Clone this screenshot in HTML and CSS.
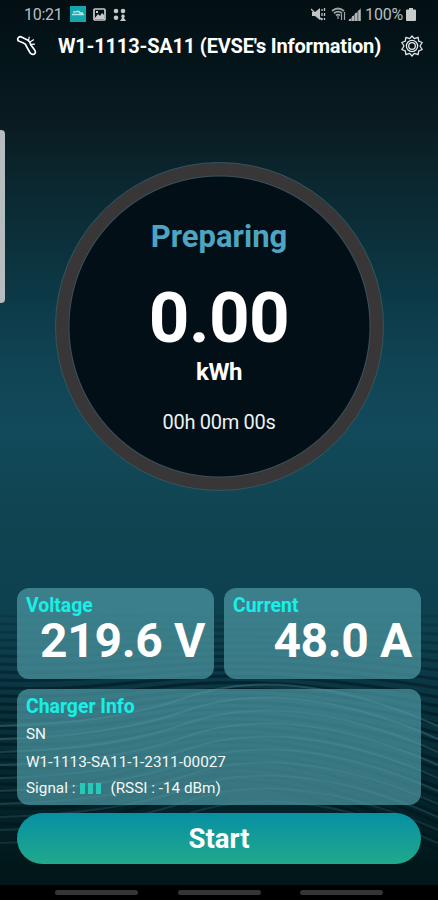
FILE: index.html
```html
<!DOCTYPE html>
<html lang="en">
<head>
    <meta charset="UTF-8">
    <meta name="viewport" content="width=device-width, initial-scale=1.0">
    <title>EVSE Charger</title>
    <link rel="stylesheet" href="styles.css">
</head>
<body>
    <div class="app">
        <!-- Background waves -->
        <svg class="waves" viewBox="0 0 438 285" preserveAspectRatio="none" aria-hidden="true">
            <g id="wave-dark" fill="none" stroke="#02151d" stroke-width="3"></g>
            <g id="wave-light" fill="none" stroke="#6fa9b3" stroke-width="2"></g>
        </svg>

        <!-- Status bar -->
        <div class="status-bar">
            <div class="status-left">
                <span class="clock">10:21</span>
                <svg class="app-icon" width="16" height="16" viewBox="0 0 16 16"><rect width="16" height="16" fill="#17a5ad"/><path d="M2 8.500h12M3 6h3M6 5.500h3l1 1.500h3" stroke="#a8e7e4" stroke-width="1.4" fill="none"/></svg>
                <svg class="picture-icon" width="13" height="13" viewBox="0 0 13 13"><rect x="1" y="1" width="11" height="11" rx="1" fill="none" stroke="#c9cccd" stroke-width="1.7"/><path d="M2 10l3-4 2 2 2-3 2 2v4H2zM3 3h2v2H3z" fill="#c9cccd"/></svg>
                <svg width="13" height="13" viewBox="0 0 13 13" fill="#c5c8c9"><circle cx="3" cy="3" r="2.300"/><circle cx="10" cy="3" r="2.300"/><circle cx="3" cy="9.800" r="2.300"/><path d="M10 6l2 2-1 2 2 3H7l2-3-1-2z"/></svg>
            </div>
            <div class="status-right">
                <svg width="15" height="14" viewBox="0 0 15 14"><path d="M1 5h3l5-4v12L4 9H1z" fill="#c0c4c5"/><path d="M0 2l11 11M11 2v2M13.500 1v3M11 6v3M13.500 6v3M11 11v2M13.500 11v2" stroke="#c0c4c5" stroke-width="1.300"/></svg>
                <svg class="wifi" width="15" height="14" viewBox="0 0 15 14" fill="none" stroke="#9fa5a7" stroke-width="1.800"><path d="M1 4q6-5 12 0M3 6.300q4-3.300 8 0M5 8.500q2-1.700 4 0"/><path d="M7 9v3M10.500 13V7M13.500 5v8" stroke-width="1.200"/></svg>
                <svg width="13" height="13" viewBox="0 0 13 13"><path d="M0 13L13 0v13z" fill="#74797b"/><path d="M2 13v-2M5 13V8M8 13V5M11.500 13V2" stroke="#b5babb" stroke-width="1.800"/></svg>
                <span class="battery-text">100%</span>
                <svg class="battery" width="10" height="13" viewBox="0 0 10 13"><path d="M3 0h4v1.500h2q1 0 1 1V12q0 1-1 1H1q-1 0-1-1V2.500q0-1 1-1h2z" fill="#c9cccd"/></svg>
            </div>
        </div>

        <!-- Header -->
        <header class="header">
            <svg class="plug-icon" width="22" height="22" viewBox="0 0 22 22" fill="none" stroke="#fff" stroke-width="1.700" stroke-linejoin="round" stroke-linecap="round"><path d="M2.500 2.500Q4 1 6 2.200L12 5.300Q14.200 6.500 14.600 9.500L18.800 15.300Q20.300 18 18 19.200Q15.800 20 14.200 18L10.500 11.500Q10 9 7.500 8L2.600 6Q.8 4.500 2.500 2.500z"/><path d="M12.600 5l.6-3M14.500 6.800l3-2M15.200 9.300l3.300-.2" stroke-width="1.200"/></svg>
            <h1>W1-1113-SA11 (EVSE's Information)</h1>
            <svg class="gear-icon" width="22" height="22" viewBox="0 0 22 22" fill="none" stroke="#e4e7e8" stroke-width="1.300" stroke-linejoin="round"><path d="M11 1l2.300 2.700 3.800-1.400.6 3.900 3.500 1.300L19 11l2.200 3.500-3.500 1.300-.6 3.900-3.800-1.400L11 21l-2.300-2.700-3.800 1.400-.6-3.900-3.500-1.300L3 11 .8 7.500l3.500-1.300.6-3.900 3.800 1.400z"/><circle cx="11" cy="11" r="5.600"/><circle cx="11" cy="11" r="3.300"/></svg>
        </header>

        <div class="edge-handle"></div>

        <!-- Charging dial -->
        <main class="dial">
            <div class="dial-status">Preparing</div>
            <div class="dial-energy">0.00</div>
            <div class="dial-unit">kWh</div>
            <div class="dial-time">00h 00m 00s</div>
        </main>

        <section class="panels">
            <div class="readings">
                <div class="card reading">
                    <h2>Voltage</h2>
                    <div class="value">219.6 V</div>
                </div>
                <div class="card reading">
                    <h2>Current</h2>
                    <div class="value">48.0 A</div>
                </div>
            </div>
            <div class="card charger-info">
                <h2>Charger Info</h2>
                <p>SN</p>
                <p class="serial">W1-1113-SA11-1-2311-00027</p>
                <p class="signal">Signal : <span class="bars"><i></i><i></i><i></i></span> <span>(RSSI : -14 dBm)</span></p>
            </div>
            <button class="start-button">Start</button>
        </section>

        <!-- System navigation -->
        <nav class="nav-bar"><span></span><span></span><span></span></nav>
    </div>
    <script src="script.js"></script>
</body>
</html>
```

FILE: styles.css
```css
* {
    box-sizing: border-box;
}
body {
    margin: 0;
    font-family: Roboto, "Liberation Sans", sans-serif;
    color: #fff;
    background: #000;
}
h1, h2, p {
    margin: 0;
}
svg {
    flex: none;
}
.app {
    position: relative;
    isolation: isolate;
    width: 438px;
    height: 900px;
    overflow: hidden;
    display: flex;
    flex-direction: column;
    background: linear-gradient(#030f13 0, #04151a 60px, #0a1c22 125px, #0b2b34 205px, #0c3744 285px, #104454 365px, #124a5b 430px, #104451 510px, #0e4250 580px, #0d3e4b 645px, #09323e 710px, #04242b 800px, #011719 870px);
}
.waves {
    position: absolute;
    z-index: -1;
    top: 600px;
    left: 0;
    width: 438px;
    height: 285px;
}
.status-bar {
    height: 28px;
    padding: 0 22px 0 24px;
    display: flex;
    justify-content: space-between;
    align-items: center;
    font-size: 16px;
    color: #b9bfc1;
}
.status-left, .status-right {
    display: flex;
    align-items: center;
}
.status-left {
    gap: 8px;
}
.clock {
    letter-spacing: -0.3px;
}
.picture-icon {
    margin: 0 -1px;
}
.status-right {
    gap: 2px;
}
.wifi {
    margin-left: 3px;
}
.battery-text {
    margin-left: 2px;
    letter-spacing: -0.2px;
}
.battery {
    margin-left: 1px;
}
.header {
    height: 36px;
    padding: 0 15px 0 16px;
    display: flex;
    align-items: center;
    justify-content: space-between;
}
.header h1 {
    font-size: 20px;
    line-height: 36px;
    letter-spacing: -0.19px;
    white-space: nowrap;
}
.edge-handle {
    position: absolute;
    top: 130px;
    left: 0;
    width: 5px;
    height: 173px;
    border-radius: 0 4px 4px 0;
    background: #b7bdbf;
}
.dial {
    width: 329px;
    height: 329px;
    flex: none;
    margin: 98px auto 0;
    padding-top: 41px;
    border: 1px solid #33565f;
    border-radius: 50%;
    text-align: center;
    background: radial-gradient(circle, #020f17 149.5px, #38525b 150.5px, #383637 151.5px);
}
.dial-status {
    padding-top: 15px;
    font-size: 31px;
    line-height: 36px;
    font-weight: bold;
    color: #4ea5c2;
}
.dial-energy {
    margin-top: 21px;
    font-size: 71px;
    line-height: 84px;
    letter-spacing: -0.6px;
    font-weight: bold;
}
.dial-unit {
    margin-top: -2px;
    font-size: 24px;
    line-height: 28px;
    letter-spacing: -0.5px;
    font-weight: bold;
}
.dial-time {
    margin-top: 24px;
    font-size: 20px;
    line-height: 24px;
    letter-spacing: -0.3px;
    color: #edf1f2;
}
.panels {
    padding: 97px 17px 0;
    display: flex;
    flex-direction: column;
    gap: 10px;
}
.readings {
    display: flex;
    gap: 10px;
}
.card {
    border-radius: 12px;
    background: rgba(79, 154, 165, 0.7);
}
.card h2 {
    font-size: 19.4px;
    line-height: 22px;
    color: #16f0e6;
}
.reading {
    flex: 1;
    height: 91px;
    padding: 7px 9px;
}
.value {
    font-size: 48px;
    line-height: 48px;
    letter-spacing: -0.35px;
    text-align: right;
    font-weight: bold;
}
.charger-info {
    height: 116px;
    padding: 7px 9px;
    font-size: 15.3px;
    color: #f4f8f8;
}
.charger-info p {
    line-height: 27px;
    margin-top: 3px;
}
.charger-info .serial {
    margin-top: 1px;
}
.charger-info .signal {
    margin-top: -1px;
    display: flex;
    align-items: center;
    gap: 5px;
}
.bars {
    display: flex;
    gap: 3px;
    margin-right: 4px;
}
.bars i {
    width: 5px;
    height: 11px;
    background: #26c9b7;
}
.start-button {
    height: 51px;
    margin-top: -2px;
    padding: 0;
    border: none;
    border-radius: 26px;
    background: linear-gradient(#088fa4, #20a98b);
    color: #fff;
    font: bold 27.5px Roboto, sans-serif;
}
.nav-bar {
    height: 15px;
    margin-top: auto;
    padding: 5px 55px;
    display: flex;
    justify-content: space-between;
    background: #000;
}
.nav-bar span {
    width: 83px;
    height: 5px;
    border-radius: 3px;
    background: #353535;
}
```

FILE: script.js
```js
function addWaves(id, count, getPath, getOpacity) {
    const group = document.getElementById(id);
    for (let i = 0; i < count; i++) {
        const path = document.createElementNS("http://www.w3.org/2000/svg", "path");
        path.setAttribute("d", getPath(i));
        path.setAttribute("opacity", getOpacity(i));
        group.appendChild(path);
    }
}

// Flat ripples that bend upwards in the middle further down
addWaves("wave-dark", 27, i => {
    const y = 16 + i * 8;
    const rise = i * 1.8;
    return `M0 ${y} C60 ${y + 2} 100 ${y - 2} 160 ${y - rise / 2} S300 ${y - rise} 438 ${y + i}`;
}, i => Math.min(0.6, 0.12 + i * 0.045));

// Lighter arcs behind the charger info
addWaves("wave-light", 10, i => {
    const y = 86 + i * 13;
    return `M0 ${y + 40} Q115 ${y + 37} 185 ${y + 12} C245 ${y - 10} 330 ${y - 8} 438 ${y + 40}`;
}, i => 0.28 - i * 0.015);
```
